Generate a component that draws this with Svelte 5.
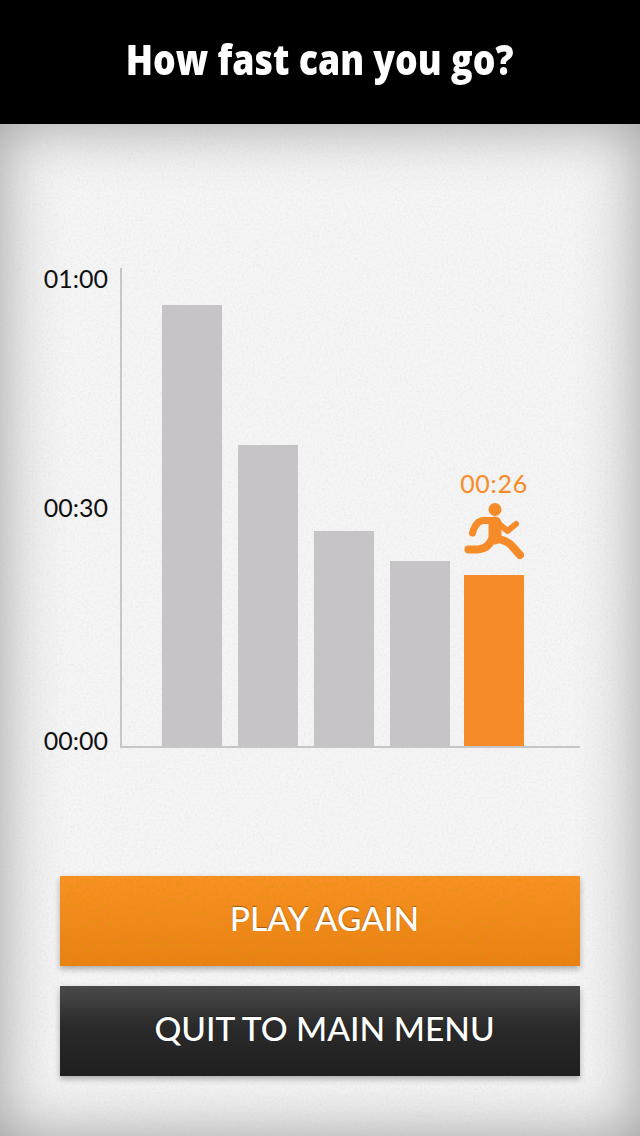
<script lang="ts">
	const bars = [
		{ height: 441 },
		{ height: 301 },
		{ height: 215 },
		{ height: 185 }
	];
	const ticks = ['01:00', '00:30', '00:00'];
</script>

<svg class="filters" width="0" height="0" aria-hidden="true">
	<filter id="paper" x="0" y="0" width="100%" height="100%">
		<feTurbulence type="fractalNoise" baseFrequency="0.45" numOctaves="3" seed="4" />
		<feColorMatrix values="0 0 0 0 0.45  0 0 0 0 0.45  0 0 0 0 0.45  0.2 0.2 0 0 -0.17" />
	</filter>
	<filter id="grain" x="0" y="0" width="100%" height="100%">
		<feTurbulence type="fractalNoise" baseFrequency="0.3" numOctaves="3" seed="9" />
		<feColorMatrix values="0 0 0 0 0.7  0 0 0 0 0.3  0 0 0 0 0  0.8 0.8 0 0 -0.66" />
	</filter>
</svg>

<div class="screen">
	<header class="top-bar">
		<h1>How fast can you go?</h1>
	</header>

	<main class="results">
		<svg class="texture" width="100%" height="100%" aria-hidden="true">
			<rect width="100%" height="100%" filter="url(#paper)" />
		</svg>

		<section class="chart">
			<div class="ticks">
				{#each ticks as tick}
					<span>{tick}</span>
				{/each}
			</div>
			<div class="plot">
				{#each bars as bar}
					<div class="bar" style="height: {bar.height}px"></div>
				{/each}
				<div class="current">
					<span class="time">00:26</span>
					<svg class="runner" viewBox="0 0 60 60" width="60" height="60" aria-hidden="true">
						<circle cx="31" cy="7.5" r="6.5" fill="#f68b2a" />
						<g fill="none" stroke="#f68b2a" stroke-linecap="round" stroke-linejoin="round">
							<path d="M31 21 V36" stroke-width="13" />
							<path d="M31 18.5 H20 Q12 18.5 8.5 31" stroke-width="7" />
							<path d="M34 21 L43.5 29 L52 22" stroke-width="6" />
							<path d="M28 37 Q24 47 14 47.5 H4.5" stroke-width="8" />
							<path d="M33 37 Q42 38 47 43 L56 53" stroke-width="8" />
						</g>
					</svg>
					<div class="bar highlight"></div>
				</div>
			</div>
		</section>

		<div class="actions">
			<button class="btn play">
				<svg class="texture" width="100%" height="100%" aria-hidden="true">
					<rect width="100%" height="100%" filter="url(#grain)" />
				</svg>
				<span>PLAY AGAIN</span>
			</button>
			<button class="btn quit"><span>QUIT TO MAIN MENU</span></button>
		</div>
	</main>
</div>

<style>
	:global(body) {
		background: #f4f4f4;
	}

	.filters {
		position: absolute;
	}

	.screen {
		display: flex;
		flex-direction: column;
		width: 640px;
		height: 1136px;
		overflow: hidden;
		font-family: Lato, "Open Sans", sans-serif;
	}

	.top-bar {
		flex: 0 0 124px;
		display: flex;
		align-items: center;
		justify-content: center;
		background: #000;
	}

	h1 {
		margin: 0 0 8px;
		font-family: "Open Sans", sans-serif;
		font-size: 43px;
		font-weight: 800;
		white-space: nowrap;
		color: #fff;
		transform: scaleX(0.83);
	}

	.results {
		position: relative;
		flex: 1;
		display: flex;
		flex-direction: column;
		padding: 144px 60px 60px 0;
		background: #f5f5f5;
		box-shadow: inset 0 0 60px rgba(0, 0, 0, 0.36);
	}

	.texture {
		position: absolute;
		inset: 0;
		pointer-events: none;
	}

	.chart {
		position: relative;
		display: flex;
		height: 480px;
	}

	.ticks {
		flex: 0 0 120px;
		display: flex;
		flex-direction: column;
		justify-content: space-between;
		align-items: flex-end;
		box-sizing: border-box;
		margin: -5px 0 -7px;
		padding-right: 12px;
		font-size: 25px;
		line-height: 30px;
		color: #111;
	}

	.ticks span:nth-child(2) {
		margin-bottom: 5px;
	}

	.plot {
		flex: 1;
		display: flex;
		align-items: flex-end;
		gap: 16px;
		padding-left: 40px;
		border-left: 2px solid #c6c5c7;
		border-bottom: 2px solid #c6c5c7;
	}

	.bar {
		flex: 0 0 60px;
		width: 60px;
		background: #c6c4c6;
	}

	.current {
		display: flex;
		flex-direction: column;
		align-items: center;
		width: 60px;
		margin-left: -2px;
	}

	.time {
		margin-bottom: 5px;
		font-size: 25px;
		line-height: 28px;
		letter-spacing: 0.7px;
		white-space: nowrap;
		color: #f68b2a;
	}

	.runner {
		display: block;
		margin-bottom: 13px;
	}

	.highlight {
		flex: 0 0 171px;
		background: #f68b2a;
	}

	.actions {
		position: relative;
		display: flex;
		flex-direction: column;
		gap: 20px;
		margin: auto 0 0 60px;
	}

	.btn {
		position: relative;
		height: 90px;
		padding: 0 0 6px 9px;
		border: 0;
		font-family: inherit;
		font-size: 33.5px;
		font-weight: 500;
		color: #fff;
		box-shadow: 0 3px 6px rgba(0, 0, 0, 0.3);
	}

	.btn span {
		position: relative;
		text-shadow: 0 -1px 1px rgba(0, 0, 0, 0.35);
	}

	.play {
		background: linear-gradient(#fb9026, #ea7f16);
	}

	.quit {
		background: linear-gradient(#4a4a4a, #2a2a2a 45%, #1f1f1f);
	}
</style>
